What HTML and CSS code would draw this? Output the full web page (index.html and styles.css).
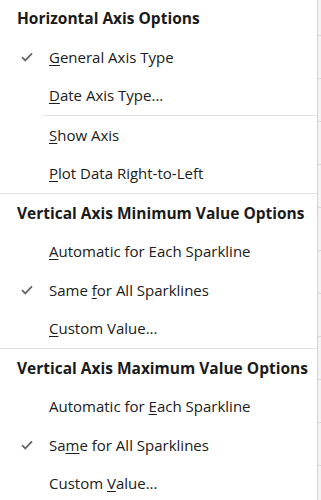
FILE: index.html
```html
<!DOCTYPE html>
<html>
<head>
<meta charset="utf-8">
<link rel="stylesheet" href="styles.css">
</head>
<body>
<div class="screen">
  <div class="menu">
    <div class="header">Horizontal Axis Options</div>
    <div class="item checked"><span class="check"><svg width="12" height="10" viewBox="0 0 12 10"><polyline points="1,5.2 4.3,8.4 11,1.4" fill="none" stroke="#666" stroke-width="1.8"/></svg></span><span class="label"><u>G</u>eneral Axis Type</span></div>
    <div class="item"><span class="check"></span><span class="label"><u>D</u>ate Axis Type...</span></div>
    <div class="sep indent"></div>
    <div class="item"><span class="check"></span><span class="label"><u>S</u>how Axis</span></div>
    <div class="item"><span class="check"></span><span class="label"><u>P</u>lot Data Right-to-Left</span></div>
    <div class="sep"></div>
    <div class="header">Vertical Axis Minimum Value Options</div>
    <div class="item"><span class="check"></span><span class="label"><u>A</u>utomatic for Each Sparkline</span></div>
    <div class="item checked"><span class="check"><svg width="12" height="10" viewBox="0 0 12 10"><polyline points="1,5.2 4.3,8.4 11,1.4" fill="none" stroke="#666" stroke-width="1.8"/></svg></span><span class="label">Same <u>f</u>or All Sparklines</span></div>
    <div class="item"><span class="check"></span><span class="label"><u>C</u>ustom Value...</span></div>
    <div class="sep"></div>
    <div class="header">Vertical Axis Maximum Value Options</div>
    <div class="item"><span class="check"></span><span class="label">Automatic for <u>E</u>ach Sparkline</span></div>
    <div class="item checked"><span class="check"><svg width="12" height="10" viewBox="0 0 12 10"><polyline points="1,5.2 4.3,8.4 11,1.4" fill="none" stroke="#666" stroke-width="1.8"/></svg></span><span class="label">Sa<u>m</u>e for All Sparklines</span></div>
    <div class="item"><span class="check"></span><span class="label">Custom <u>V</u>alue...</span></div>
  </div>
  <div class="sheet"></div>
</div>
</body>
</html>
```
FILE: styles.css
```css
html, body {
  margin: 0;
  padding: 0;
  background: #ffffff;
  overflow: hidden;
}
.screen {
  display: flex;
  width: 321px;
  height: 500px;
  overflow: hidden;
}
.menu {
  width: 317px;
  flex: none;
  background: #ffffff;
  border-right: 1px solid #d4d4d4;
  margin-top: -1px;
  font-family: "Open Sans", "Noto Sans", sans-serif;
  font-size: 15px;
  color: #202020;
}
.sheet {
  flex: 1;
  background-color: #f3f3f3;
  background-image: repeating-linear-gradient(to bottom, transparent 0, transparent 35px, #d6d6d6 35px, #d6d6d6 36px, transparent 36px, transparent 43px);
  background-position: 0 0;
}
.header {
  height: 38.5px;
  display: flex;
  align-items: center;
  padding-left: 17px;
  font-weight: 700;
  font-size: 15.5px;
  color: #1a1a1a;
  white-space: nowrap;
}
.item {
  height: 38.5px;
  display: flex;
  align-items: center;
  white-space: nowrap;
}
.check {
  width: 49px;
  flex: none;
  display: flex;
  align-items: center;
  padding-left: 21px;
  box-sizing: border-box;
}
.check svg {
  display: block;
}
.label u {
  text-decoration: underline;
  text-underline-offset: 2px;
  text-decoration-thickness: 1px;
}
.sep {
  height: 1px;
  background: #e1e1e1;
}
.sep.indent {
  margin-left: 43px;
}
```
